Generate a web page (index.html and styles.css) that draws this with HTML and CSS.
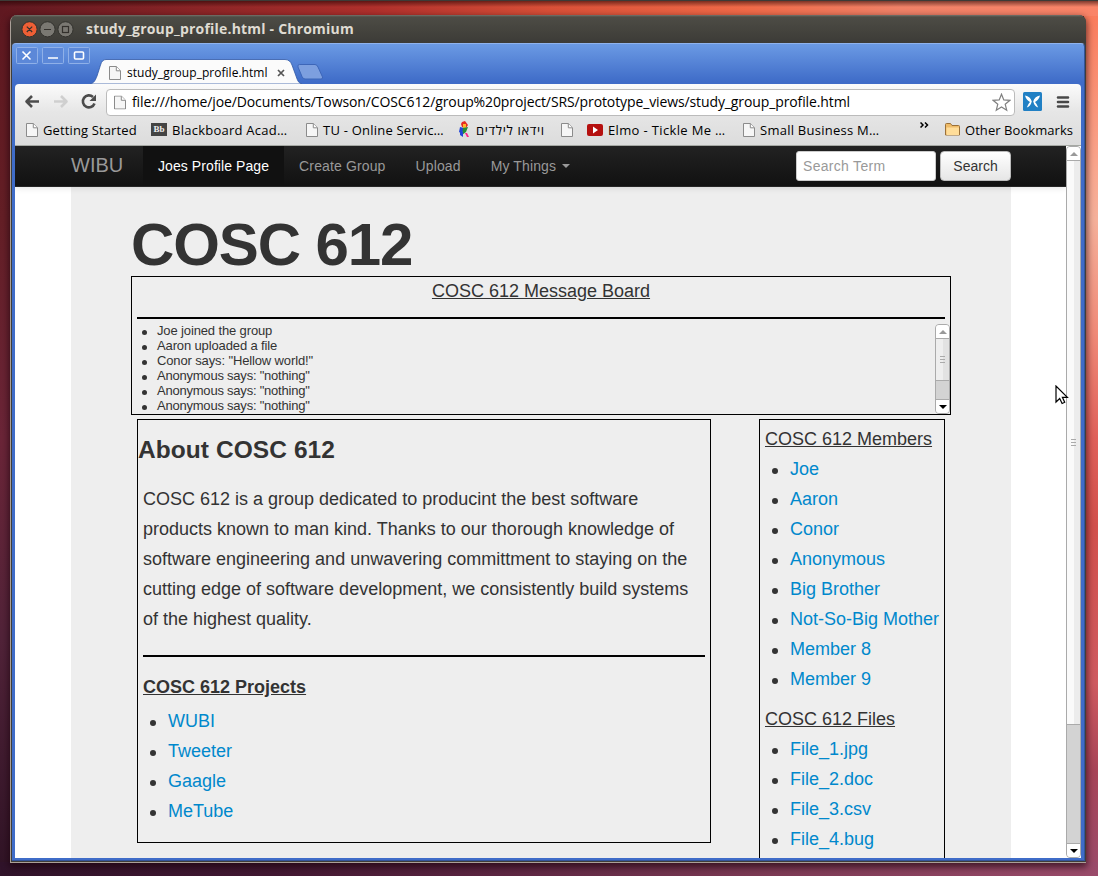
FILE: index.html
```html
<!DOCTYPE html>
<html lang="en">
<head>
<meta charset="utf-8">
<title>study_group_profile.html</title>
<link rel="stylesheet" href="styles.css">
</head>
<body>
<svg width="0" height="0" class="defs">
  <defs>
    <symbol id="doc" viewBox="0 0 12 14"><path d="M.5.5h6.8l4.2 4.2v8.8H.5z" fill="#f6f6f6" stroke="#8b8b8b"/><path d="M7.3.7v4.1h4.1" fill="#fff" stroke="#8b8b8b"/></symbol>
  </defs>
</svg>
<div class="window">
  <header class="titlebar">
    <svg class="wm" width="54" height="18" viewBox="0 0 54 18">
      <g stroke="#33322e" stroke-width="1"><circle cx="9.5" cy="9.3" r="7.6" fill="#ee5f35"/><circle cx="27.5" cy="9.3" r="7.6" fill="#7a7872"/><circle cx="45.5" cy="9.3" r="7.6" fill="#7a7872"/></g>
      <g stroke="#33302c" stroke-width="1.2" fill="none"><path d="M6.8 6.6l5.4 5.4M12.2 6.6l-5.4 5.4M24 9.5h7"/><rect x="42.5" y="6.5" width="6" height="6"/></g>
    </svg>
    <span class="t-title">study_group_profile.html - Chromium</span>
  </header>
  <div class="frame">
    <div class="tabstrip">
      <svg class="ctl" width="76" height="18" viewBox="0 0 76 18">
        <g fill="#5c88d8" stroke="#8fb0e8"><rect x="1.5" y=".5" width="21" height="16" rx="1"/><rect x="27.5" y=".5" width="21" height="16" rx="1"/><rect x="53.5" y=".5" width="21" height="16" rx="1"/></g>
        <g stroke="#fff" stroke-width="1.6" fill="none"><path d="M7.5 4.5l8 8M15.5 4.5l-8 8M33 11h10"/><rect x="59.5" y="5" width="9" height="7" rx="1"/></g>
      </svg>
      <div class="tab">
        <svg class="tabshape" width="212" height="25" viewBox="0 0 212 25"><path d="M0 25C4 24 5 22 7 17L10.5 6Q12 .5 16 .5H195Q200 .5 202 6L206 17C208 23 209 24 212 25z" fill="#fbfbfb" stroke="#3159a6" stroke-width=".8"/></svg>
        <div class="tabrow">
          <svg width="12" height="14"><use href="#doc"/></svg>
          <span class="t-tab">study_group_profile.html</span>
          <svg class="tabx" width="8" height="8" viewBox="0 0 8 8"><path d="M1 1l6 6M7 1L1 7" stroke="#555" stroke-width="1.7"/></svg>
        </div>
      </div>
      <svg class="newtab" width="27" height="16" viewBox="0 0 27 16"><path d="M2.5.5H18Q20 .5 21 3L25.5 13Q26 15 24 15H8Q6 15 5 12.5L1 3Q.3.5 2.5.5z" fill="#7d9fdf" stroke="#3d66b8"/></svg>
    </div>
    <div class="toolbar">
      <div class="navrow">
        <svg class="navicons" width="82" height="20" viewBox="0 0 82 20">
          <g fill="none" stroke-width="2.6"><path d="M19 9.5H7M12 4L6.5 9.5l5.500 5.500" stroke="#4c4c4c" stroke-linejoin="round"/><path d="M34 9.5h12M41 4l5.500 5.500L41 15" stroke="#cfcfcf" stroke-linejoin="round"/><path d="M73 5A6 6 0 1 0 74.5 11.5" stroke="#4c4c4c"/></g><path d="M76 2.500V9h-6.500z" fill="#4c4c4c"/>
        </svg>
        <div class="omnibox">
          <svg width="12" height="15" viewBox="0 0 12 14"><use href="#doc"/></svg>
          <span class="t-url">file:///home/joe/Documents/Towson/COSC612/group%20project/SRS/prototype_views/study_group_profile.html</span>
          <svg class="star" width="19" height="19" viewBox="0 0 19 19"><path d="M9.500 1.200l2.300 5.700 6.100.4-4.700 3.900 1.500 6-5.200-3.300-5.200 3.300 1.500-6L1.100 7.300l6.100-.4z" fill="#fff" stroke="#808080" stroke-width="1.2"/></svg>
        </div>
        <svg class="ext" width="19" height="19" viewBox="0 0 19 19"><rect width="19" height="19" rx="1.5" fill="#2180c4"/><path d="M2 3.500Q7.500 4.500 8.800 9.500Q7.500 14.500 3.800 15.500Q5 12 7 10Q3 7.500 2 3.500zM17 3.500Q11.500 4.500 10.200 9.500Q11.500 14.500 15.200 15.500Q14 12 12 10Q16 7.500 17 3.500z" fill="#fff"/></svg>
        <svg class="menu" width="14" height="14" viewBox="0 0 14 14"><path d="M2 2.500h10M2 7h10M2 11.500h10" stroke="#484848" stroke-width="2.6" stroke-linecap="round"/></svg>
      </div>
      <div class="bookmarks">
        <span class="bm b1"><svg width="12" height="14"><use href="#doc"/></svg><span class="t-b1">Getting Started</span></span>
        <span class="bm b2"><span class="bb">Bb</span><span class="t-b2">Blackboard Acad…</span></span>
        <span class="bm b3"><svg width="12" height="14"><use href="#doc"/></svg><span class="t-b3">TU - Online Servic…</span></span>
        <span class="bm b4"><svg width="12" height="17" viewBox="0 0 12 17"><path d="M4 1l3-1 3 4-2 3-4-1-1-3z" fill="#e52b20"/><path d="M5 3l3 0 0 4-3 0z" fill="#ffb52a"/><path d="M2 6l4 1-2 6-3-2z" fill="#2144d8"/><path d="M5 7l5-1-2 5-4 3z" fill="#278c35"/><path d="M2 10l3 1 0 5-3-2z" fill="#2144d8"/><path d="M7 12l2 0 2 4H9z" fill="#f28"/></svg><span class="t-b4" dir="rtl">וידאו לילדים</span></span>
        <span class="bm b5"><svg width="12" height="14"><use href="#doc"/></svg></span>
        <span class="bm b6"><svg width="16" height="12" viewBox="0 0 16 12"><rect width="16" height="12" rx="2" fill="#b5100f"/><path d="M6 2.500v7l5-3.500z" fill="#fff"/></svg><span class="t-b6">Elmo - Tickle Me …</span></span>
        <span class="bm b7"><svg width="12" height="14"><use href="#doc"/></svg><span class="t-b7">Small Business M…</span></span>
        <svg class="more" width="9" height="6" viewBox="0 0 9 6"><path d="M.5.5L3 3 .5 5.500M5 .5L7.500 3 5 5.500" fill="none" stroke="#000" stroke-width="1.5"/></svg>
        <span class="bm b8"><svg width="15" height="13" viewBox="0 0 15 13"><path d="M.5 12V1.500Q.5.5 1.500.5H5.500L7 2.500h6.500q1 0 1 1V12z" fill="#eebb68" stroke="#9a7038"/><path d="M1.500 4.500H14V12H1.500z" fill="#ffdd99"/></svg><span class="t-b8">Other Bookmarks</span></span>
      </div>
    </div>
    <div class="viewport">
      <div class="page">
        <nav class="navbar">
          <span class="brand">WIBU</span>
          <span class="nav active">Joes Profile Page</span>
          <span class="nav">Create Group</span>
          <span class="nav">Upload</span>
          <span class="nav">My Things <i class="caret"></i></span>
          <span class="search">Search Term</span>
          <span class="btn">Search</span>
        </nav>
        <main class="hero">
          <h1>COSC 612</h1>
          <section class="board">
            <div class="boardtitle">COSC 612 Message Board</div>
            <div class="feed">
              <ul>
                <li>Joe joined the group</li><li>Aaron uploaded a file</li><li>Conor says: "Hellow world!"</li><li class="tight">Anonymous says: "nothing"</li><li class="tight">Anonymous says: "nothing"</li><li class="tight">Anonymous says: "nothing"</li>
              </ul>
              <div class="sbar small">
                <span class="sbtn up"><i></i></span><span class="thumb"><i></i></span><span class="track"></span><span class="sbtn down"><i></i></span>
              </div>
            </div>
          </section>
          <div class="cols">
            <section class="about">
              <h2>About COSC 612</h2>
              <p>COSC 612 is a group dedicated to producint the best software<br>products known to man kind. Thanks to our thorough knowledge of<br>software engineering and unwavering committment to staying on the<br>cutting edge of software development, we consistently build systems<br>of the highest quality.</p>
              <div class="rule"></div>
              <h3>COSC 612 Projects</h3>
              <ul class="links"><li><a>WUBI</a></li><li><a>Tweeter</a></li><li><a>Gaagle</a></li><li><a>MeTube</a></li></ul>
            </section>
            <aside class="side">
              <div class="sidetitle">COSC 612 Members</div>
              <ul class="links"><li><a>Joe</a></li><li><a>Aaron</a></li><li><a>Conor</a></li><li><a>Anonymous</a></li><li><a>Big Brother</a></li><li><a>Not-So-Big Mother</a></li><li><a>Member 8</a></li><li><a>Member 9</a></li></ul>
              <div class="sidetitle">COSC 612 Files</div>
              <ul class="links"><li><a>File_1.jpg</a></li><li><a>File_2.doc</a></li><li><a>File_3.csv</a></li><li><a>File_4.bug</a></li></ul>
            </aside>
          </div>
        </main>
      </div>
      <div class="sbar large">
        <span class="sbtn up"><i></i></span><span class="thumb"><i></i></span><span class="track"></span><span class="sbtn down"><i></i></span>
      </div>
    </div>
  </div>
</div>
<svg class="cursor" width="14" height="20" viewBox="0 0 14 20"><path d="M1 1v16l3.700-3.500 2.400 5 2.600-1.200-2.300-5h5z" fill="#fff" stroke="#000" stroke-width="1.2"/></svg>
</body>
</html>
```
FILE: styles.css
```css
* { box-sizing: border-box; }
html, body { margin: 0; height: 876px; overflow: hidden; }
body {
  width: 1098px; padding: 14px 0 0 10px; position: relative;
  border-top: 1px solid #3c3b37;
  font-family: "Liberation Sans", Arial, sans-serif; color: #333;
  background:
    linear-gradient(rgba(30,0,0,.65), rgba(30,0,0,0)) 0 0/100% 7px no-repeat,
    linear-gradient(90deg, #5f1820 0, #8c2527 18%, #b0302c 34%, #d95038 50%, #f06a48 68%, #f08268 82%, #fa8468 100%) 0 0/100% 16px no-repeat,
    linear-gradient(90deg, #30132a 0, #421832 25%, #5b2541 45%, #7c3a54 70%, #9a4b6a 100%) 0 100%/100% 14px no-repeat,
    linear-gradient(#5f1820 0, #641f26 25%, #6b2538 50%, #512339 73%, #2f1325 100%) 0 0/12px 100% no-repeat,
    linear-gradient(#fa7858 0, #f9a890 20%, #f5b09a 25%, #f08a78 38%, #e0605a 50%, #d2504c 60%, #cf5a60 78%, #a84458 88%, #9a4b6a 100%) 100% 0/14px 100% no-repeat,
    #5f1820;
}
svg { display: block; flex: none; }
.defs { position: absolute; }
ul, h1, h2, h3, p { margin: 0; padding: 0; list-style: none; }
.window { width: 1076px; height: 848px; border-radius: 7px 7px 0 0; overflow: hidden; background: #3f3e3a; box-shadow: 0 3px 7px 1px rgba(25,0,10,.65); display: flex; flex-direction: column; border: solid #aaa098; border-width: 0 0 1px 1px; }
.titlebar { height: 28px; flex: none; background: linear-gradient(#75746c 0, #4d4c45 2px, #3c3b37 100%); display: flex; align-items: center; padding-left: 9px; }
.t-title { margin: -2px 0 0 12px; font: bold 14px "Open Sans", sans-serif; letter-spacing: .2px; color: #dfdbd2; white-space: nowrap; }
.frame { flex: 1; min-height: 0; border: solid #34549a; border-width: 1px 1px 1px 0; border-top-color: #8fb3ee; margin: 0 1px 1px 1px; border-radius: 4px 4px 0 0; background: linear-gradient(#6b9ae4 0, #3f6cc8 38px, #3f6cc8 100%); display: flex; flex-direction: column; padding: 0 3px 2px 3px; }
.tabstrip { height: 40px; flex: none; display: flex; }
.ctl { margin-top: 3px; }
.tab { width: 212px; height: 25px; margin: 15px 0 0 -1px; display: grid; }
.tabshape, .tabrow { grid-area: 1/1; }
.tabrow { display: flex; align-items: center; padding: 2px 0 0 19px; z-index: 1; }
.t-tab { font: 12px "Open Sans", sans-serif; color: #000; margin-left: 6px; width: 142px; white-space: nowrap; letter-spacing: .03px; }
.tabx { margin-left: 8px; }
.newtab { margin: 20px 0 0 -5px; }
.toolbar { height: 62px; flex: none; background: linear-gradient(#fbfbfb 0, #e6e6e6 28px, #dcdcdc 100%); border-radius: 4px 4px 0 0; border-bottom: 1px solid #a5a8a3; }
.navrow { height: 32px; display: flex; align-items: center; padding: 4px 0 0 5px; }
.navicons { margin-right: 4px; }
.omnibox { width: 909px; height: 27px; border: 1px solid #bbb; border-radius: 4px; background: #fff; display: flex; align-items: center; padding: 0 3px 0 7px; margin-top: 1px; flex: none; }
.t-url { font: 14px "Open Sans", sans-serif; color: #000; margin: -2px 0 0 6px; white-space: nowrap; letter-spacing: -.11px; }
.star { margin-left: auto; }
.ext { margin: -2px 0 0 8px; }
.menu { margin: -1px 0 0 14px; }
.bookmarks { height: 27px; display: grid; grid-template-columns: 125px 155px 152px 103px 26px 156px 176px 26px auto; align-items: center; padding-left: 11px; }
.bm { display: flex; align-items: center; gap: 5px; font: 13px "Open Sans", sans-serif; color: #000; white-space: nowrap; }
.t-b1 { letter-spacing: .13px; }
.t-b2 { letter-spacing: .25px; }
.t-b3 { letter-spacing: .22px; }
.t-b4 { letter-spacing: .65px; }
.t-b6 { letter-spacing: .35px; }
.t-b7 { letter-spacing: .25px; }
.t-b8 { letter-spacing: .06px; }
.b4 { gap: 6px; }
.bb { width: 16px; height: 13px; background: #444; color: #eee; font: bold 9px/12px "Liberation Serif", serif; text-align: center; }
.more { margin: -10px 0 0 1px; }
.viewport { flex: 1; min-height: 0; display: flex; overflow: hidden; background: #fff; }
.page { width: 1051px; overflow: hidden; }
.navbar { height: 41px; padding: 0 55px 0 56px; display: flex; align-items: center; background: linear-gradient(#222, #111); border-bottom: 1px solid #252525; box-shadow: 0 1px 6px rgba(0,0,0,.12); position: relative; font-size: 14px; color: #999; }
.brand { font-size: 20px; width: 72px; line-height: 36px; padding-bottom: 2px; }
.nav { padding: 0 15px; line-height: 41px; height: 40px; white-space: nowrap; letter-spacing: .13px; }
.nav.active { background: #111; color: #fff; letter-spacing: .08px; }
.caret { display: inline-block; border: 4px solid transparent; border-top-color: #999; border-bottom: 0; vertical-align: 3px; margin-left: 2px; }
.search { margin-left: auto; width: 140px; height: 30px; background: #fff; border: 1px solid #ccc; border-radius: 3px; line-height: 29px; padding-left: 6px; letter-spacing: .3px; }
.btn { margin-left: 4px; width: 71px; height: 30px; border: 1px solid #bbb; border-radius: 4px; background: linear-gradient(#fff, #e6e6e6); color: #333; line-height: 28px; text-align: center; }
.hero { width: 940px; margin-left: 56px; height: 680px; background: #eee; padding: 28px 60px 0; font-size: 18px; line-height: 30px; }
h1 { font-size: 60px; line-height: 60px; letter-spacing: -1.1px; margin-bottom: 1px; }
.board { height: 139px; border: 1px solid #000; }
.boardtitle { height: 42px; margin: 0 5px; line-height: 28px; text-align: center; text-decoration: underline; border-bottom: 2px solid #000; }
.feed { display: flex; justify-content: space-between; font-size: 13px; line-height: 15px; padding-top: 4px; letter-spacing: -.13px; }
.tight { letter-spacing: -.22px; }
.feed ul { padding-left: 11px; }
.feed li, .links li { display: flex; align-items: center; }
.feed li::before { content: ""; width: 5px; height: 5px; border-radius: 50%; background: #333; margin: 3px 10px 0 -1px; }
.sbar { display: flex; flex-direction: column; width: 15px; flex: none; border: 1px solid #aaa; border-radius: 4px; background: #d3d3d3; }
.sbar.small { height: 90px; margin-top: 1px; }
.sbtn { height: 14px; flex: none; background: #fff; display: grid; place-items: center; }
.up { border-bottom: 1px solid #aaa; border-radius: 3px 3px 0 0; }
.down { border-top: 1px solid #aaa; border-radius: 0 0 3px 3px; }
.sbtn i { border: 4px solid transparent; }
.up i { border-top: 0; border-bottom-color: #999; }
.down i { border-bottom: 0; border-top-color: #000; }
.thumb { background: linear-gradient(90deg, #fafafa 50%, #ececec 50%); border-bottom: 1px solid #aaa; display: grid; place-items: center; }
.small .thumb { height: 42px; background: linear-gradient(90deg, #eee 55%, #e2e2e2 55%); }
.thumb i { width: 5px; height: 7px; background: repeating-linear-gradient(#aaa 0 1px, transparent 1px 3px); }
.track { flex: 1; }
.large .thumb { height: 564px; }
.cols { display: flex; justify-content: space-between; padding: 4px 6px 0; }
.about { width: 574px; height: 424px; border: 1px solid #000; padding: 0 5px; }
h2 { font-size: 24.5px; line-height: 60px; height: 64px; margin-left: -5px; letter-spacing: .07px; }
.rule { height: 2px; background: #000; margin: 21px 0 15px; }
h3 { font-size: 18px; line-height: 30px; text-decoration: underline; margin-bottom: 4px; }
.links { padding-left: 7px; margin-bottom: 10px; }
.links li::before { content: ""; width: 6px; height: 6px; border-radius: 50%; background: #333; margin: 3px 12px 0 0; }
a { color: #08c; white-space: nowrap; }
.side { width: 186px; height: 480px; border: 1px solid #000; padding: 4px 5px; }
.sidetitle { text-decoration: underline; white-space: nowrap; }
.cursor { position: absolute; left: 1055px; top: 384px; }
```
